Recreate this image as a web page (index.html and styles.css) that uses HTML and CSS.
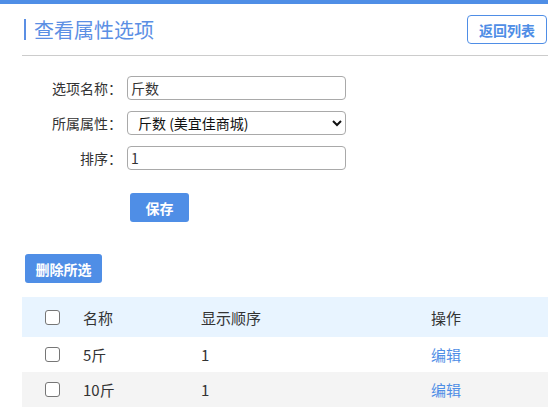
FILE: index.html
```html
<!DOCTYPE html>
<html lang="zh-CN">
<head>
<meta charset="utf-8">
<title>查看属性选项</title>
<link rel="stylesheet" href="styles.css">
</head>
<body>
<div class="topbar"></div>
<div class="page">
  <div class="header">
    <h1 class="title">查看属性选项</h1>
    <button class="btn-outline" type="button">返回列表</button>
  </div>
  <form class="form">
    <label class="label" for="name">选项名称<span class="colon">：</span></label>
    <input class="field" id="name" type="text" value="斤数">
    <label class="label" for="attr">所属属性<span class="colon">：</span></label>
    <select class="field select" id="attr">
      <option>斤数 (美宜佳商城)</option>
    </select>
    <label class="label" for="sort">排序<span class="colon">：</span></label>
    <input class="field" id="sort" type="text" value="1">
    <div class="actions">
      <button class="btn" type="button">保存</button>
    </div>
  </form>
  <button class="btn btn-del" type="button">删除所选</button>
  <table class="list">
    <colgroup>
      <col class="c1"><col class="c2"><col class="c3"><col class="c4">
    </colgroup>
    <thead>
      <tr>
        <th><input class="chk" type="checkbox"></th>
        <th>名称</th>
        <th>显示顺序</th>
        <th>操作</th>
      </tr>
    </thead>
    <tbody>
      <tr>
        <td><input class="chk" type="checkbox"></td>
        <td>5斤</td>
        <td>1</td>
        <td><a class="link" href="#">编辑</a></td>
      </tr>
      <tr class="alt">
        <td><input class="chk" type="checkbox"></td>
        <td>10斤</td>
        <td>1</td>
        <td><a class="link" href="#">编辑</a></td>
      </tr>
    </tbody>
  </table>
</div>
</body>
</html>
```
FILE: styles.css
```css
* { box-sizing: border-box; }
html, body { margin: 0; padding: 0; background: #fff; }
body {
  font-family: "Noto Sans CJK SC", "Noto Sans", "Liberation Sans", sans-serif;
  color: #333;
  font-size: 14px;
  overflow: hidden;
}
.topbar { height: 4px; background: #4f8ee6; }
.page { padding-left: 22px; }
.header {
  display: flex;
  align-items: center;
  justify-content: space-between;
  padding: 11px 1px 11px 0;
  border-bottom: 1px solid #cccccc;
}
.title {
  margin: 0 0 0 2px;
  padding-left: 8px;
  border-left: 2px solid #5b8fe4;
  font-size: 20px;
  line-height: 21px;
  font-weight: normal;
  color: #5b8fe4;
}
.btn-outline {
  width: 80px;
  height: 29px;
  padding: 0;
  border: 1px solid #4f8ee6;
  border-radius: 4px;
  background: #fff;
  color: #4f8ee6;
  font: bold 14px "Noto Sans CJK SC", sans-serif;
}
.form {
  display: grid;
  grid-template-columns: 100px 219px;
  column-gap: 5px;
  row-gap: 11px;
  margin: 20px 0 0;
  align-items: center;
}
.label {
  text-align: right;
  font-size: 14px;
  color: #333;
  line-height: 24px;
}
.colon { font-family: "Noto Sans CJK TC", "Noto Sans CJK SC", sans-serif; }
.field {
  height: 24px;
  width: 219px;
  border: 1px solid #a9a9a9;
  border-radius: 4px;
  padding: 0 3px;
  font: 14px "Noto Sans CJK SC", sans-serif;
  color: #333;
  background: #fff;
}
.select { padding-left: 6px; color: #111; }
.actions {
  grid-column: 2;
  margin-top: 12px;
  padding-left: 3px;
}
.btn {
  width: 59px;
  height: 29px;
  padding: 0;
  border: none;
  border-radius: 3px;
  background: #4f8ee6;
  color: #fff;
  font: bold 14px "Noto Sans CJK SC", sans-serif;
}
.btn-del {
  display: block;
  width: 77px;
  margin: 32px 0 0 3px;
}
.list {
  margin-top: 14px;
  width: 526px;
  border-collapse: collapse;
  table-layout: fixed;
  font-size: 15px;
}
.c1 { width: 61px; }
.c2 { width: 118px; }
.c3 { width: 230px; }
.c4 { width: 117px; }
.list th, .list td {
  padding: 0;
  text-align: left;
  font-weight: normal;
  vertical-align: middle;
  color: #333;
}
.list th:first-child, .list td:first-child { padding-left: 23px; }
.list thead tr { background: #e8f4ff; height: 40px; }
.list tbody tr { height: 35px; }
.list tbody tr.alt { background: #f4f4f4; }
.chk {
  appearance: none;
  -webkit-appearance: none;
  display: block;
  margin: 0;
  width: 15px;
  height: 15px;
  border: 1px solid #767676;
  border-radius: 3px;
  background: #fff;
}
.link { color: #4f8ee6; text-decoration: none; }
```
